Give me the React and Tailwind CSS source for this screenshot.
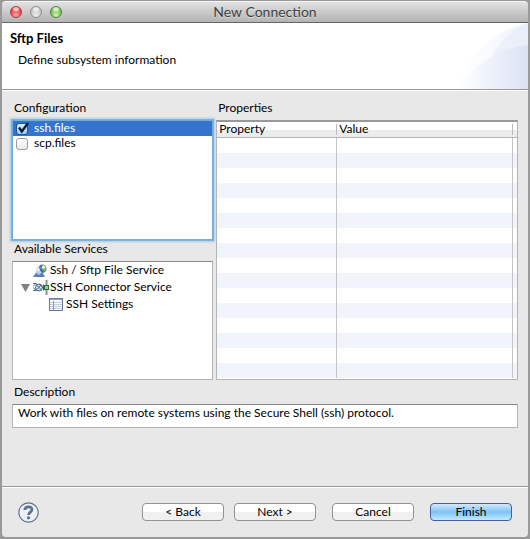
import { useState } from "react";

function TrafficLight({ label, tone }) {
  return (
    <button
      type="button"
      aria-label={label}
      className={`relative h-3 w-3 overflow-hidden rounded-full border ${tone}`}
    >
      <span className="absolute inset-x-[2px] top-0 h-1 rounded-full bg-white/60" />
    </button>
  );
}

function TitleBar() {
  return (
    <header className="grid h-[22px] shrink-0 grid-cols-[1fr_auto_1fr] items-center rounded-t border-t border-b border-t-[#f4f4f4] border-b-[#666] bg-linear-to-b from-[#e2e2e2] to-[#b3b3b3] px-2">
      <div className="flex gap-2">
        <TrafficLight label="Close" tone="border-[#a33b3b] bg-radial-[at_50%_90%] from-[#ffa0a0] to-[#e02c33]" />
        <TrafficLight label="Minimize" tone="border-[#8c8c8c] bg-radial-[at_50%_90%] from-[#eeeeee] to-[#b8b8b8]" />
        <TrafficLight label="Zoom" tone="border-[#4c7f3c] bg-radial-[at_50%_90%] from-[#cdf5a6] to-[#64b04c]" />
      </div>
      <h1 className="text-[14px] leading-5 text-[#404040] [text-shadow:0_1px_0_#ffffff80]">New Connection</h1>
    </header>
  );
}

function Banner() {
  return (
    <section className="relative h-[67px] shrink-0 border-b border-[#999] bg-white">
      <svg className="absolute top-0 right-0 h-[66px] w-[76px]" viewBox="0 0 76 66" aria-hidden="true">
        <defs>
          <linearGradient id="outer" x1="0" x2="1">
            <stop offset="0" stopColor="#fff" />
            <stop offset=".5" stopColor="#f8faff" />
            <stop offset="1" stopColor="#edf1fa" />
          </linearGradient>
          <linearGradient id="inner" x1="0" x2="1">
            <stop offset="0" stopColor="#fff" />
            <stop offset="1" stopColor="#dae2f4" />
          </linearGradient>
        </defs>
        <path d="M4 66 C14 37 37 8 76 0 V66 Z" fill="url(#outer)" />
        <path d="M38 36 C48 18 61 5 76 0 V40 Z" fill="#e6ecf9" opacity=".65" />
        <path d="M6 66 C21 43 46 25 76 22 V66 Z" fill="url(#inner)" />
      </svg>
      <div className="relative px-2 pt-[5px]">
        <h2 className="text-[13px] leading-5 font-bold">Sftp Files</h2>
        <p className="pt-[2px] pl-2 leading-5">Define subsystem information</p>
      </div>
    </section>
  );
}

function FileOption({ name, checked, selected, onChange }) {
  return (
    <label className={`flex h-[15px] items-center gap-[6px] pl-[3px] ${selected ? "bg-[#3474cf] text-white" : ""}`}>
      <span className="relative h-3 w-3">
        <input
          type="checkbox"
          checked={checked}
          onChange={onChange}
          className="block h-3 w-3 appearance-none rounded-[3px] border border-[#9b9b9b] bg-linear-to-b from-white to-[#e9e9e9] checked:border-[#24538f] checked:from-[#d6ebff] checked:to-[#91cbf8]"
        />
        {checked && (
          <svg className="pointer-events-none absolute -top-px left-0 h-3 w-[14px]" viewBox="0 0 14 12" aria-hidden="true">
            <path d="M3 5.5 L5.8 9.5 L12 1" fill="none" stroke="#08182e" strokeWidth="2.2" />
          </svg>
        )}
      </span>
      <span className="pb-[2px]">{name}</span>
    </label>
  );
}

function FileServiceIcon() {
  return (
    <svg width="14" height="14" viewBox="0 0 14 14" aria-hidden="true">
      <circle cx="9.3" cy="4.8" r="4.2" fill="#3c73a8" />
      <path d="M8.5 1 C12 .5 13.6 3.5 13 6.5 L10.5 7.5 L9 5Z" fill="#7fa66a" />
      <circle cx="10.6" cy="3.2" r="1.7" fill="#f3edc0" />
      <path d="M4 3 L7 2.5 L8 7 L12 12 H1 L3 8Z" fill="#b7cfec" />
      <path d="M4.5 4 L6.2 3.5 L6.5 7 L4 7.5Z" fill="#eaf3ff" />
      <path d="M0 13 L3 9 L6 11 L9 8 L12 13Z" fill="#5880b6" />
      <path d="M6.5 3.5 L8.5 8" stroke="#3b5f92" />
    </svg>
  );
}

function ConnectorIcon() {
  return (
    <svg width="16" height="17" viewBox="0 0 16 17" aria-hidden="true">
      <path d="M0 4.5 H3 L5 6.5 M0 7.5 L3 4.5 M0 11.5 H3 L5 9.5 M0 8.5 L4 12" fill="none" stroke="#4a6f8c" />
      <circle cx="6" cy="8.5" r="3.5" fill="#cadde8" stroke="#456a86" />
      <path d="M3.5 6 L8.5 11 M8 6 L4 10.5 M6 5 L9 8" stroke="#456a86" strokeWidth=".9" />
      <path d="M9 8.5 H11 M10.5 5.5 V11.5" stroke="#46605c" />
      <path d="M13.5 1 V16" stroke="#8b8f90" strokeWidth="2" />
      <rect x="11.5" y="6.5" width="4" height="4" fill="#8fcf96" stroke="#2a7039" />
    </svg>
  );
}

function SettingsIcon() {
  return (
    <svg width="14" height="13" viewBox="0 0 14 13" aria-hidden="true">
      <rect x=".5" y=".5" width="13" height="12" fill="#f6f9ff" stroke="#667d9a" />
      <path d="M1 1.5 H13" stroke="#91a6c0" />
      <path d="M1 4.5 H13 M1 6.5 H13 M1 8.5 H13 M1 10.5 H13" stroke="#c6d0dd" />
      <path d="M4.5 3 V12" stroke="#8197b1" />
    </svg>
  );
}

function ServiceTree() {
  return (
    <ul className="h-[119px] border border-[#b5b5b5] border-t-[#888] bg-white">
      <li className="flex h-[17px] items-center gap-[3px] pl-5">
        <FileServiceIcon />
        <span className="pb-[2px]">Ssh / Sftp File Service</span>
      </li>
      <li>
        <div className="flex h-[17px] items-center gap-px pl-2">
          <button type="button" aria-label="Collapse SSH Connector Service" className="mr-[2px]">
            <svg width="9" height="8" viewBox="0 0 9 8" aria-hidden="true">
              <path d="M0 0 H9 L4.5 8Z" fill="#808080" />
            </svg>
          </button>
          <ConnectorIcon />
          <span className="pb-[2px]">SSH Connector Service</span>
        </div>
        <ul>
          <li className="flex h-[17px] items-center gap-[3px] pl-9">
            <SettingsIcon />
            <span className="pb-[2px]">SSH Settings</span>
          </li>
        </ul>
      </li>
    </ul>
  );
}

function PropertyTable() {
  return (
    <div className="h-[260px] overflow-hidden border border-[#b5b5b5] border-t-2 border-t-[#999] bg-white">
      <table aria-labelledby="properties" className="w-full table-fixed border-separate border-spacing-0 text-left">
        <colgroup>
          <col className="w-[120px]" />
          <col />
          <col className="w-1" />
        </colgroup>
        <thead>
          <tr className="h-4 bg-linear-to-b from-white from-50% to-[#ececec] to-50%">
            <th className="border-b border-[#b5b5b5] p-0 font-normal">
              <span className="block h-[11px] border-r border-[#bbb] pl-[2px] leading-[10px]">Property</span>
            </th>
            <th className="border-b border-[#b5b5b5] p-0 font-normal">
              <span className="block h-[11px] border-r border-[#bbb] pl-[2px] leading-[10px]">Value</span>
            </th>
            <td className="border-b border-[#b5b5b5] p-0" />
          </tr>
        </thead>
        <tbody>
          {Array.from({ length: 16 }, (_, i) => (
            <tr key={i} className="h-[15px] even:bg-[#f1f5fb]">
              <td className="border-r border-[#c4c4c4] p-0" />
              <td className="border-r border-[#c4c4c4] p-0" />
              <td className="p-0" />
            </tr>
          ))}
        </tbody>
      </table>
    </div>
  );
}

function PushButton({ children, primary }) {
  return (
    <button
      type="button"
      className={`h-[18px] w-[82px] rounded border leading-4 ${
        primary
          ? "border-[#5059a0] bg-linear-to-b from-[#d5e9fa] via-[#7fc1f5] to-[#bdecff]"
          : "border-[#929292] bg-linear-to-b from-white from-50% to-[#f0f0f0] to-50%"
      }`}
    >
      {children}
    </button>
  );
}

const caption = "mb-[3px] block h-[18px] pl-[2px] leading-[18px]";

export default function App() {
  const [files, setFiles] = useState({ "ssh.files": true, "scp.files": false });
  const toggle = (name) => setFiles({ ...files, [name]: !files[name] });

  return (
    <div className="flex min-h-screen flex-col bg-[#999] px-[2px] pt-px pb-[2px] font-['Lato',sans-serif] text-[12px] text-black">
      <TitleBar />
      <Banner />
      <main className="flex grow flex-col rounded-b border-t border-white bg-[#e8e8e8]">
        <div className="grid grid-cols-[2fr_3fr] gap-[3px] px-[10px] pt-2">
          <div>
            <h3 className={caption}>Configuration</h3>
            <div className="h-[120px] border border-[#75add8] bg-white shadow-[0_0_0_1px_#7eb2dc,0_0_2px_2px_#a9cce7]">
              {Object.keys(files).map((name) => (
                <FileOption
                  key={name}
                  name={name}
                  checked={files[name]}
                  selected={name === "ssh.files"}
                  onChange={() => toggle(name)}
                />
              ))}
            </div>
            <h3 className={caption}>Available Services</h3>
            <ServiceTree />
          </div>
          <div>
            <h3 id="properties" className={caption}>Properties</h3>
            <PropertyTable />
          </div>
        </div>
        <div className="px-[10px] pt-[3px]">
          <label htmlFor="description" className={caption}>Description</label>
          <input
            id="description"
            readOnly
            defaultValue="Work with files on remote systems using the Secure Shell (ssh) protocol."
            className="block h-6 w-full border border-[#b5b5b5] border-t-[#888] bg-white px-[5px] pb-2 outline-none"
          />
        </div>
        <footer className="mt-auto flex h-[51px] items-center border-t border-[#999] pr-4 pl-4 shadow-[inset_0_1px_0_#fff]">
          <button type="button" aria-label="Help" className="mr-auto">
            <svg width="21" height="21" viewBox="0 0 21 21" aria-hidden="true">
              <circle cx="10.5" cy="10.5" r="9.7" fill="#edf0f4" stroke="#5d7191" strokeWidth="1.2" />
              <path d="M6.8 8 C7 3.8 14 3.8 14 7.6 C14 10.2 10.5 10 10.5 13" fill="none" stroke="#5d7191" strokeWidth="2.7" />
              <circle cx="10.5" cy="15.8" r="1.6" fill="#5d7191" />
            </svg>
          </button>
          <div className="flex gap-4">
            <div className="flex gap-[10px]">
              <PushButton>&lt; Back</PushButton>
              <PushButton>Next &gt;</PushButton>
            </div>
            <PushButton>Cancel</PushButton>
            <PushButton primary>Finish</PushButton>
          </div>
        </footer>
      </main>
    </div>
  );
}
